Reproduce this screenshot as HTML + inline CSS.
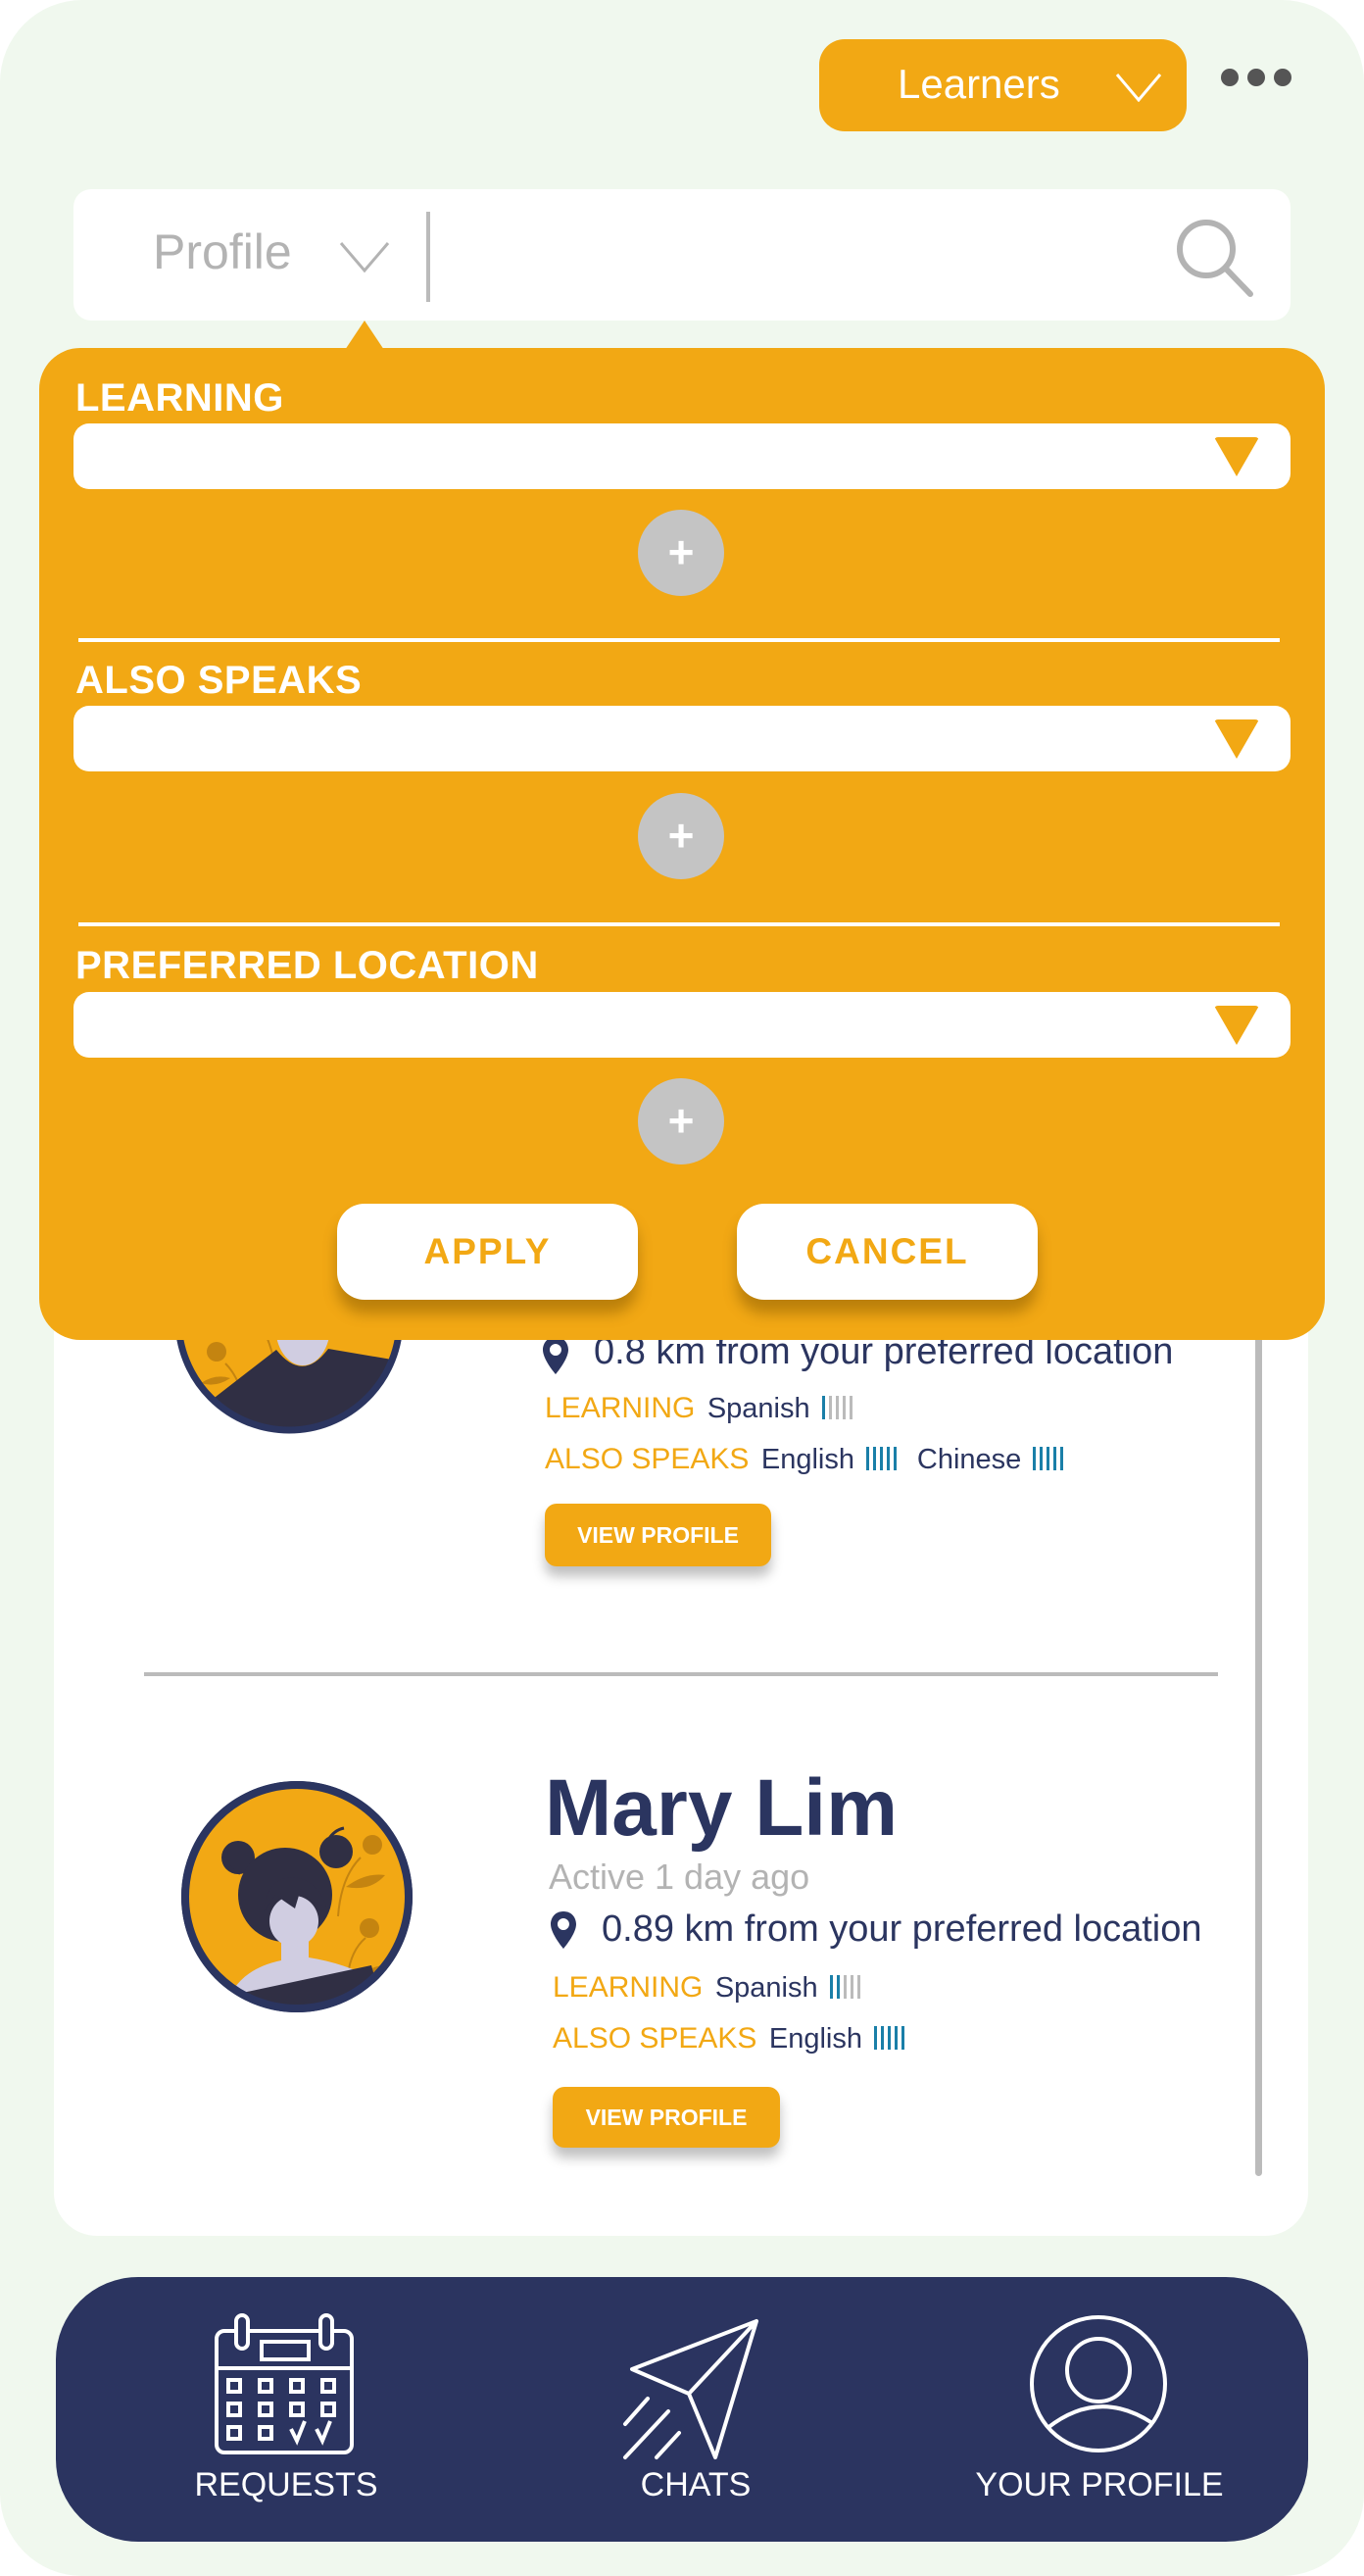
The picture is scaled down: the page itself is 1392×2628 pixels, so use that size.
<!DOCTYPE html>
<html><head><meta charset="utf-8"><style>
*{margin:0;padding:0;box-sizing:border-box}
body{width:1392px;height:2628px;background:#fff;position:relative;overflow:hidden;font-family:"Liberation Sans",sans-serif}
.a{position:absolute}
.bg{left:0;top:0;width:1392px;height:2628px;background:#f0f8ee;border-radius:84px}
.lbl{color:#fff;font-weight:bold;font-size:40px;left:77px;letter-spacing:0.5px}
.inp{left:75px;width:1242px;height:67px;background:#fff;border-radius:16px}
.tri{width:0;height:0;border-left:23px solid transparent;border-right:23px solid transparent;border-top:40px solid #f2a814;right:32px;top:14px;border-radius:4px}
.plus{width:88px;height:88px;border-radius:50%;background:#c4c4c4;left:651px;color:#fff;font-size:46px;font-weight:bold;text-align:center;line-height:86px}
.hr{left:80px;width:1226px;height:4px;background:#fff}
.btn{height:98px;width:307px;background:#fff;border-radius:28px;color:#f2a814;font-weight:bold;font-size:37px;text-align:center;line-height:98px;box-shadow:0 14px 14px rgba(120,80,0,.45);top:1228px;letter-spacing:2px}
.navy{color:#2b3560}
.or{color:#f2a814;font-size:30px}
.lang{color:#2b3560;font-size:29px;margin-left:8px}
.bars{display:inline-block;vertical-align:-2px;margin-left:12px;font-size:0;line-height:0}
.bars i{display:inline-block;width:3px;height:24px;margin-right:4px;background:#bbb}
.bars i.b{background:#1a7fa8}
.vp{background:#f2a814;color:#fff;font-weight:bold;font-size:23px;text-align:center;border-radius:12px;box-shadow:0 10px 12px rgba(0,0,0,.25)}
.nl{color:#fff;font-size:34px;top:2516px;text-align:center;width:400px}
</style></head><body>
<div class="a bg"></div>
<div class="a" style="left:836px;top:40px;width:375px;height:94px;background:#f2a814;border-radius:26px"></div>
<div class="a" style="left:916px;top:62px;color:#fff;font-size:42px">Learners</div>
<svg class="a" style="left:1138px;top:74px" width="48" height="30"><path d="M2 2 L24 28 L46 2" fill="none" stroke="#fff" stroke-width="3"/></svg>
<svg class="a" style="left:1244px;top:68px" width="76" height="22"><circle cx="11" cy="11" r="9" fill="#555"/><circle cx="38" cy="11" r="9" fill="#555"/><circle cx="65" cy="11" r="9" fill="#555"/></svg>
<div class="a" style="left:75px;top:193px;width:1242px;height:134px;background:#fff;border-radius:18px"></div>
<div class="a" style="left:156px;top:228px;color:#b3b3b3;font-size:50px">Profile</div>
<svg class="a" style="left:346px;top:246px" width="52" height="32"><path d="M2 2 L26 30 L50 2" fill="none" stroke="#b3b3b3" stroke-width="3"/></svg>
<div class="a" style="left:435px;top:216px;width:4px;height:92px;background:#bbb"></div>
<svg class="a" style="left:1196px;top:216px" width="90" height="90"><circle cx="35" cy="38" r="27" fill="none" stroke="#b3b3b3" stroke-width="6"/><path d="M55 58 L80 84" stroke="#b3b3b3" stroke-width="6" stroke-linecap="round"/></svg>
<div class="a" style="left:55px;top:1300px;width:1280px;height:981px;background:#fff;border-radius:44px"></div>
<div class="a" style="left:1281px;top:1320px;width:7px;height:900px;background:#bbb;border-radius:4px"></div>
<svg class="a" style="left:175px;top:1226px" width="240" height="240" viewBox="0 0 240 240">
<defs><clipPath id="c1"><circle cx="120" cy="120" r="113"/></clipPath></defs>
<circle cx="120" cy="120" r="116" fill="#2b3560"/>
<g clip-path="url(#c1)"><rect width="240" height="240" fill="#f2a814"/>
<circle cx="46" cy="153" r="10" fill="#c48410"/>
<path d="M30 185 Q45 175 60 180 Q45 190 30 185Z" fill="#c48410"/>
<path d="M55 165 Q65 175 70 190 M98 140 Q102 150 104 160" stroke="#c48410" stroke-width="2" fill="none"/>
<ellipse cx="134" cy="127" rx="28" ry="40" fill="#d0cde1"/>
<path d="M45 199 L107 151 Q134 185 160 150 L225 161 L240 240 L0 240Z" fill="#302f44"/>
</g><circle cx="120" cy="120" r="113" fill="none" stroke="#2b3560" stroke-width="7"/></svg>
<svg class="a" style="left:552px;top:1362px" width="30" height="42"><path d="M15 2 C6 2 2 9 2 15 C2 25 15 40 15 40 C15 40 28 25 28 15 C28 9 24 2 15 2Z M15 9 A6 6 0 1 1 14.9 9Z" fill="#2b3560" fill-rule="evenodd"/></svg>
<div class="a navy" style="left:606px;top:1358px;font-size:38px">0.8 km from your preferred location</div>
<div class="a" style="left:556px;top:1420px;white-space:nowrap"><span class="or">LEARNING</span> <span class="lang">Spanish</span><span class="bars"><i class="b"></i><i></i><i></i><i></i><i></i></span></div>
<div class="a" style="left:556px;top:1472px;white-space:nowrap"><span class="or">ALSO SPEAKS</span> <span class="lang">English</span><span class="bars"><i class="b"></i><i class="b"></i><i class="b"></i><i class="b"></i><i class="b"></i></span>&nbsp;&nbsp;<span class="lang">Chinese</span><span class="bars"><i class="b"></i><i class="b"></i><i class="b"></i><i class="b"></i><i class="b"></i></span></div>
<div class="a vp" style="left:556px;top:1534px;width:231px;height:64px;line-height:64px">VIEW PROFILE</div>
<div class="a" style="left:147px;top:1706px;width:1096px;height:4px;background:#bbb"></div>
<svg class="a" style="left:183px;top:1815px" width="240" height="240" viewBox="0 0 240 240">
<defs><clipPath id="c2"><circle cx="120" cy="120" r="113"/></clipPath></defs>
<circle cx="120" cy="120" r="118" fill="#2b3560"/>
<g clip-path="url(#c2)"><rect width="240" height="240" fill="#f2a814"/>
<circle cx="197" cy="67" r="10" fill="#c48410"/><circle cx="194" cy="152" r="10" fill="#c48410"/>
<path d="M170 110 Q190 95 210 98 Q195 115 170 110Z" fill="#c48410"/>
<path d="M180 205 Q195 190 210 190 Q200 205 180 205Z" fill="#c48410"/>
<path d="M185 80 Q165 100 162 140 M190 162 Q175 175 172 200" stroke="#c48410" stroke-width="2" fill="none"/>
<circle cx="60" cy="80" r="17" fill="#302f44"/><circle cx="160" cy="74" r="17" fill="#302f44"/>
<path d="M48 72 Q45 92 62 96 M152 62 Q158 52 168 50" stroke="#302f44" stroke-width="3" fill="none"/>
<circle cx="108" cy="118" r="48" fill="#302f44"/>
<path d="M104 165 L104 185 Q70 192 55 215 L60 240 L200 240 L200 205 Q170 188 132 182 L132 165Z" fill="#d0cde1"/>
<ellipse cx="117" cy="145" rx="25" ry="26" fill="#d0cde1"/>
<path d="M86 136 Q88 104 112 100 Q140 100 150 130 Q132 126 124 112 L118 132 Q106 124 98 118Z" fill="#302f44"/>
<path d="M55 220 L196 190 L210 240 L60 240Z" fill="#302f44"/>
</g><circle cx="120" cy="120" r="114" fill="none" stroke="#2b3560" stroke-width="8"/></svg>
<div class="a navy" style="left:556px;top:1798px;font-size:82px;font-weight:bold">Mary Lim</div>
<div class="a" style="left:560px;top:1894px;font-size:36px;color:#b3b3b3">Active 1 day ago</div>
<svg class="a" style="left:560px;top:1948px" width="30" height="42"><path d="M15 2 C6 2 2 9 2 15 C2 25 15 40 15 40 C15 40 28 25 28 15 C28 9 24 2 15 2Z M15 9 A6 6 0 1 1 14.9 9Z" fill="#2b3560" fill-rule="evenodd"/></svg>
<div class="a navy" style="left:614px;top:1947px;font-size:38px">0.89 km from your preferred location</div>
<div class="a" style="left:564px;top:2011px;white-space:nowrap"><span class="or">LEARNING</span> <span class="lang">Spanish</span><span class="bars"><i class="b"></i><i class="b"></i><i></i><i></i><i></i></span></div>
<div class="a" style="left:564px;top:2063px;white-space:nowrap"><span class="or">ALSO SPEAKS</span> <span class="lang">English</span><span class="bars"><i class="b"></i><i class="b"></i><i class="b"></i><i class="b"></i><i class="b"></i></span></div>
<div class="a vp" style="left:564px;top:2129px;width:232px;height:62px;line-height:62px">VIEW PROFILE</div>
<div class="a" style="left:40px;top:355px;width:1312px;height:1012px;background:#f2a814;border-radius:42px"></div>
<div class="a" style="left:352px;top:327px;width:0;height:0;border-left:20px solid transparent;border-right:20px solid transparent;border-bottom:30px solid #f2a814"></div>
<div class="a lbl" style="top:384px">LEARNING</div>
<div class="a inp" style="top:432px"><div class="a tri"></div></div>
<div class="a plus" style="top:520px">+</div>
<div class="a hr" style="top:651px"></div>
<div class="a lbl" style="top:672px">ALSO SPEAKS</div>
<div class="a inp" style="top:720px"><div class="a tri"></div></div>
<div class="a plus" style="top:809px">+</div>
<div class="a hr" style="top:941px"></div>
<div class="a lbl" style="top:963px">PREFERRED LOCATION</div>
<div class="a inp" style="top:1012px"><div class="a tri"></div></div>
<div class="a plus" style="top:1100px">+</div>
<div class="a btn" style="left:344px">APPLY</div>
<div class="a btn" style="left:752px">CANCEL</div>
<div class="a" style="left:57px;top:2323px;width:1278px;height:270px;background:#2b3460;border-radius:84px"></div>
<svg class="a" style="left:215px;top:2358px" width="150" height="150" viewBox="0 0 150 150" fill="none" stroke="#fff" stroke-width="4">
<rect x="6" y="20" width="138" height="124" rx="8"/><line x1="6" y1="58" x2="144" y2="58"/>
<rect x="26" y="4" width="12" height="34" rx="6" fill="#2b3460"/><rect x="112" y="4" width="12" height="34" rx="6" fill="#2b3460"/>
<rect x="52" y="31" width="48" height="18"/>
<rect x="18" y="70" width="12" height="12"/><rect x="50" y="70" width="12" height="12"/><rect x="82" y="70" width="12" height="12"/><rect x="114" y="70" width="12" height="12"/>
<rect x="18" y="94" width="12" height="12"/><rect x="50" y="94" width="12" height="12"/><rect x="82" y="94" width="12" height="12"/><rect x="114" y="94" width="12" height="12"/>
<rect x="18" y="118" width="12" height="12"/><rect x="50" y="118" width="12" height="12"/>
<path d="M82 120 L88 132 L96 112 M108 120 L114 132 L122 112"/></svg>
<svg class="a" style="left:630px;top:2362px" width="150" height="150" viewBox="0 0 150 150" fill="none" stroke="#fff" stroke-width="4" stroke-linejoin="round" stroke-linecap="round">
<path d="M142 6 L15 55 L73 80 L100 145 Z M142 6 L73 80"/>
<path d="M31 85 L8 111 M52 98 L8 145 M63 120 L40 145"/></svg>
<svg class="a" style="left:1049px;top:2360px" width="144" height="144" viewBox="0 0 144 144" fill="none" stroke="#fff" stroke-width="4">
<circle cx="72" cy="72" r="68"/><circle cx="72" cy="58" r="32"/><path d="M20 117 Q72 76 127 112"/></svg>
<div class="a nl" style="left:92px">REQUESTS</div>
<div class="a nl" style="left:510px">CHATS</div>
<div class="a nl" style="left:922px">YOUR PROFILE</div>
</body></html>
